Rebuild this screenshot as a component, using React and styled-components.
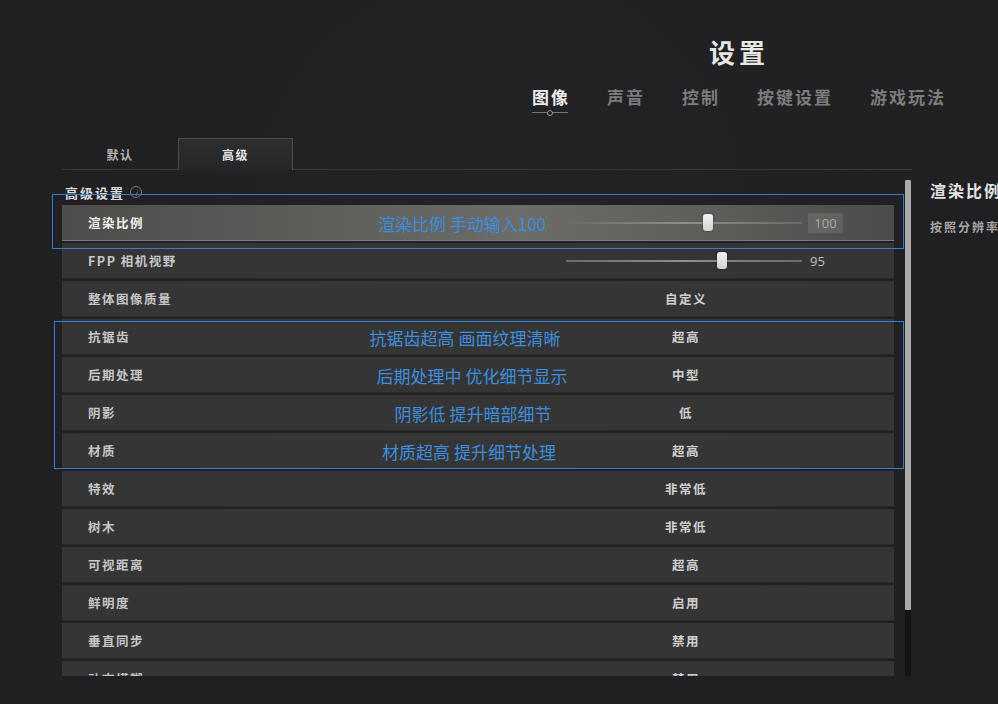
import React from 'react';
import styled, { createGlobalStyle } from 'styled-components';

const GlobalStyle = createGlobalStyle`
  html, body {
    margin: 0;
    padding: 0;
    background: #202022;
  }
  body {
    font-family: "Noto Sans CJK SC", "Noto Sans", sans-serif;
    color: #d8d8d8;
  }
`;

const Page = styled.div`
  position: relative;
  width: 998px;
  height: 704px;
  overflow: hidden;
  padding-top: 36px;
  box-sizing: border-box;
  background: radial-gradient(ellipse at 50% 30%, #232325 0%, #202022 70%);
`;

const Title = styled.div`
  padding-left: 480px;
  text-align: center;
  height: 32px;
  line-height: 32px;
  font-size: 26px;
  font-weight: 700;
  letter-spacing: 4px;
  color: #e6e6e2;
`;

const Nav = styled.div`
  display: flex;
  gap: 37px;
  margin-top: 17px;
  padding-left: 532px;
  height: 26px;
`;

const NavTab = styled.div`
  position: relative;
  font-size: 17px;
  font-weight: 700;
  letter-spacing: 2px;
  line-height: 24px;
  color: ${(p) => (p.active ? '#ececec' : '#7c7c7c')};
`;

const NavMark = styled.div`
  position: absolute;
  left: 0;
  right: 2px;
  bottom: -2px;
  height: 1px;
  background: #777;
  &::after {
    content: '';
    position: absolute;
    left: 50%;
    top: -2px;
    width: 4px;
    height: 4px;
    margin-left: -3px;
    border: 1px solid #999;
    border-radius: 50%;
    background: #202022;
  }
`;

const Body = styled.div`
  position: relative;
  display: flex;
  margin-top: 27px;
`;

const Main = styled.div`
  margin-left: 62px;
  width: 850px;
  flex: none;
`;

const SubTabs = styled.div`
  display: flex;
  height: 31px;
  border-bottom: 1px solid #38383a;
`;

const SubTab = styled.div`
  width: ${(p) => (p.active ? '115px' : '116px')};
  box-sizing: border-box;
  display: flex;
  align-items: center;
  justify-content: center;
  font-size: 12px;
  font-weight: 700;
  letter-spacing: 1.5px;
  color: ${(p) => (p.active ? '#e4e4e4' : '#b4b4b4')};
  border: 1px solid ${(p) => (p.active ? '#4a4a4c' : 'transparent')};
  border-bottom: none;
  background: ${(p) => (p.active ? 'linear-gradient(180deg, #2e2e30 0%, #262628 100%)' : 'transparent')};
  margin-bottom: ${(p) => (p.active ? '-1px' : '0')};
  height: ${(p) => (p.active ? '32px' : '31px')};
`;

const Content = styled.div`
  display: flex;
`;

const Column = styled.div`
  width: 832px;
`;

const Heading = styled.div`
  display: flex;
  align-items: center;
  gap: 5px;
  margin-top: 14px;
  margin-left: 3px;
  height: 16px;
  font-size: 13px;
  font-weight: 700;
  letter-spacing: 2px;
  color: #dcdcdc;
`;

const Info = styled.span`
  display: inline-flex;
  align-items: center;
  justify-content: center;
  width: 10px;
  height: 10px;
  border: 1px solid #777;
  border-radius: 50%;
  font-size: 8px;
  font-style: italic;
  font-weight: 400;
  letter-spacing: 0;
  color: #888;
`;

const List = styled.div`
  margin-top: 5px;
  height: 471px;
  overflow: hidden;
  display: flex;
  flex-direction: column;
  gap: 2px;
`;

const Row = styled.div`
  position: relative;
  flex: none;
  display: flex;
  align-items: center;
  height: 36px;
  box-sizing: border-box;
  background: ${(p) =>
    p.selected
      ? 'linear-gradient(90deg, #4d4d4b 0%, #60605d 35%, #6c6c69 55%, #5c5c59 80%, #4b4b49 100%)'
      : '#353536'};
  border-bottom: 1px solid ${(p) => (p.selected ? '#7a7a76' : '#2a2a2b')};
`;

const Label = styled.div`
  width: ${(p) => p.width}px;
  flex: none;
  box-sizing: border-box;
  padding-left: 26px;
  font-size: 12.5px;
  font-weight: 700;
  letter-spacing: 1.5px;
  color: ${(p) => (p.selected ? '#f0f0f0' : '#c6c6c6')};
`;

const Value = styled.div`
  width: 200px;
  text-align: center;
  font-size: 12.5px;
  font-weight: 700;
  letter-spacing: 1.5px;
  color: #cfcfcf;
`;

const Track = styled.div`
  position: relative;
  width: 236px;
  height: 2px;
  background: linear-gradient(90deg, #6a6a6a, #8e8e8e 50%, #6a6a6a);
`;

const Thumb = styled.div`
  position: absolute;
  top: -8px;
  width: 10px;
  height: 17px;
  margin-left: -5px;
  border-radius: 3px;
  background: linear-gradient(180deg, #f2f2f2, #d2d2d2);
  box-shadow: 0 0 2px rgba(0, 0, 0, 0.6);
`;

const Number = styled.div`
  margin-left: ${(p) => (p.boxed ? '6px' : '8px')};
  width: ${(p) => (p.boxed ? '35px' : 'auto')};
  height: 20px;
  line-height: 20px;
  text-align: center;
  font-size: 13px;
  color: ${(p) => (p.boxed ? '#a8a8a6' : '#c0c0c0')};
  background: ${(p) => (p.boxed ? 'rgba(255, 255, 255, 0.1)' : 'transparent')};
  font-family: "Open Sans", "Noto Sans", sans-serif;
`;

const Note = styled.div`
  position: absolute;
  left: ${(p) => p.center}px;
  top: 50%;
  transform: translate(-50%, -50%);
  white-space: nowrap;
  font-size: 17px;
  color: #3d8ede;
`;

const Scroll = styled.div`
  position: relative;
  margin-left: 11px;
  margin-top: 10px;
  width: 6px;
  height: 496px;
  background: #141415;
`;

const ScrollThumb = styled.div`
  height: 430px;
  background: #a9a9a9;
  border-radius: 1px;
`;

const Side = styled.div`
  margin-left: 18px;
  margin-top: 42px;
  white-space: nowrap;
`;

const SideTitle = styled.div`
  font-size: 16px;
  font-weight: 700;
  line-height: 20px;
  letter-spacing: 2px;
  color: #e2e2e2;
`;

const SideText = styled.div`
  margin-top: 18px;
  font-size: 12px;
  font-weight: 700;
  letter-spacing: 2px;
  color: #a6a6a6;
`;

const Frame = styled.div`
  position: absolute;
  left: ${(p) => p.x}px;
  top: ${(p) => p.y}px;
  width: ${(p) => p.w}px;
  height: ${(p) => p.h}px;
  border: 1.5px solid #2f80cc;
  box-sizing: border-box;
  pointer-events: none;
`;

const navTabs = ['图像', '声音', '控制', '按键设置', '游戏玩法'];

const rows = [
  { label: '渲染比例', slider: 60, number: '100', boxed: true, selected: true, note: '渲染比例 手动输入100', at: 400 },
  { label: 'FPP 相机视野', slider: 66, number: '95' },
  { label: '整体图像质量', value: '自定义' },
  { label: '抗锯齿', value: '超高', note: '抗锯齿超高 画面纹理清晰', at: 403 },
  { label: '后期处理', value: '中型', note: '后期处理中 优化细节显示', at: 410 },
  { label: '阴影', value: '低', note: '阴影低 提升暗部细节', at: 411 },
  { label: '材质', value: '超高', note: '材质超高 提升细节处理', at: 407 },
  { label: '特效', value: '非常低' },
  { label: '树木', value: '非常低' },
  { label: '可视距离', value: '超高' },
  { label: '鲜明度', value: '启用' },
  { label: '垂直同步', value: '禁用' },
  { label: '动态模糊', value: '禁用' },
];

const SettingRow = ({ row }) => (
  <Row selected={row.selected}>
    <Label width={row.slider ? 504 : 524} selected={row.selected}>
      {row.label}
    </Label>
    {row.slider ? (
      <>
        <Track>
          <Thumb style={{ left: `${row.slider}%` }} />
        </Track>
        <Number boxed={row.boxed}>{row.number}</Number>
      </>
    ) : (
      <Value>{row.value}</Value>
    )}
    {row.note && <Note center={row.at}>{row.note}</Note>}
  </Row>
);

export default function App() {
  return (
    <Page>
      <GlobalStyle />
      <Title>设置</Title>
      <Nav>
        {navTabs.map((t, i) => (
          <NavTab key={t} active={i === 0}>
            {t}
            {i === 0 && <NavMark />}
          </NavTab>
        ))}
      </Nav>
      <Body>
        <Main>
          <SubTabs>
            <SubTab>默认</SubTab>
            <SubTab active>高级</SubTab>
          </SubTabs>
          <Content>
            <Column>
              <Heading>
                高级设置 <Info>i</Info>
              </Heading>
              <List>
                {rows.map((r) => (
                  <SettingRow key={r.label} row={r} />
                ))}
              </List>
            </Column>
            <Scroll>
              <ScrollThumb />
            </Scroll>
          </Content>
        </Main>
        <Side>
          <SideTitle>渲染比例</SideTitle>
          <SideText>按照分辨率调整渲染</SideText>
        </Side>
        <Frame x={52} y={56} w={852} h={55} />
        <Frame x={54} y={183} w={850} h={148} />
      </Body>
    </Page>
  );
}
